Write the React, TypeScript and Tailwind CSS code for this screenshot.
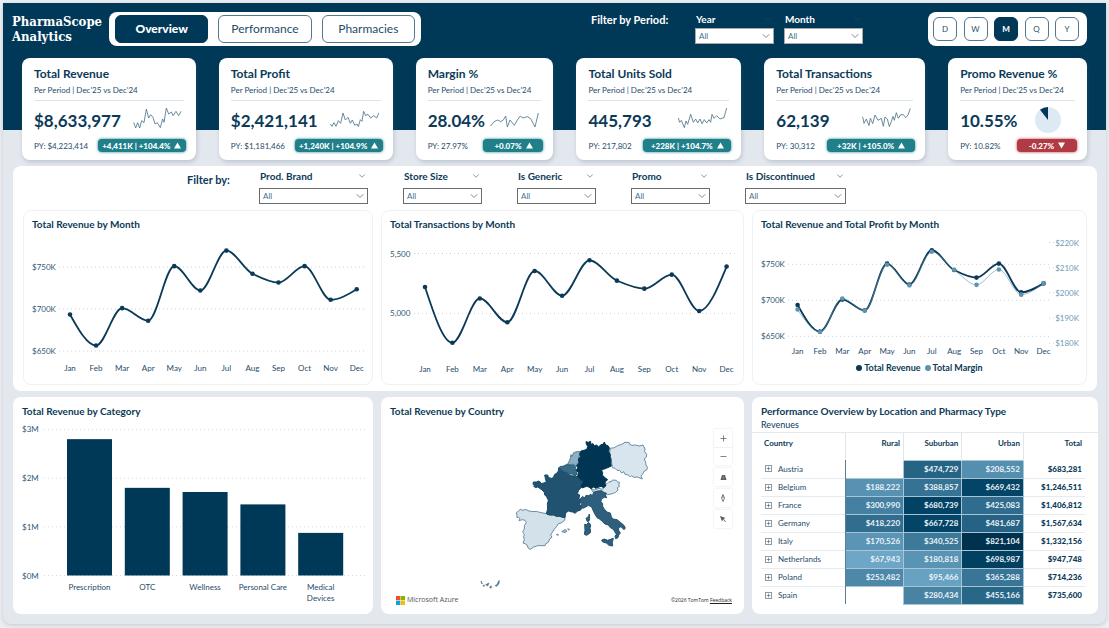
import { useState } from "react";
import type { ReactNode } from "react";
import { ChevronDown, Plus, Minus } from "lucide-react";
import clsx from "clsx";

const MONTHS = ["Jan", "Feb", "Mar", "Apr", "May", "Jun", "Jul", "Aug", "Sep", "Oct", "Nov", "Dec"];
const REVENUE = [693.5, 656.5, 701, 686, 751, 722, 769.5, 742, 731.5, 751, 711, 723.5];
const TRANSACTIONS = [5220, 4754, 5124, 4925, 5354, 5147, 5443, 5273, 5206, 5323, 5019, 5391];
const MARGIN = [193.4, 184.5, 197.8, 193.1, 211.2, 203, 216.3, 209.2, 203.2, 209.3, 199.3, 203.9];

const KPIS = [
  {
    title: "Total Revenue", value: "$8,633,977", py: "$4,223,414", delta: "+4,411K | +104.4%", up: true,
    box: "403 319 147 66",
    spark: "405,365 411,382 417,366 423,382 429,360 436,366 443,325 450,352 456,342 463,350 469,370 476,366 485,381 492,355 496,365 503,322 510,340 518,334 523,345 532,332 540,345 547,332",
  },
  {
    title: "Total Profit", value: "$2,421,141", py: "$1,181,466", delta: "+1,240K | +104.9%", up: true,
    box: "986 319 147 66",
    spark: "987,370 992,377 998,366 1004,377 1011,360 1018,368 1025,337 1032,358 1040,350 1047,368 1053,358 1060,374 1067,370 1071,378 1077,357 1082,362 1087,332 1093,345 1100,341 1108,352 1117,345 1126,352 1133,336",
  },
  {
    title: "Margin %", value: "28.04%", py: "27.97%", delta: "+0.07%", up: true,
    box: "268 323 147 66",
    spark: "270,380 280,367 291,362 300,367 308,362 315,350 320,383 328,362 341,378 350,362 359,350 367,356 380,352 390,358 403,383 413,341",
  },
  {
    title: "Total Units Sold", value: "445,793", py: "217,802", delta: "+228K | +104.7%", up: true,
    box: "834 322 147 66",
    spark: "835,355 839,368 844,362 853,384 858,364 863,374 872,344 880,368 887,358 893,370 900,358 906,372 913,360 920,370 927,360 932,368 936,344 942,356 950,348 960,358 972,354 980,325",
  },
  {
    title: "Total Transactions", value: "62,139", py: "30,312", delta: "+32K | +105.0%", up: true,
    box: "365 316 147 66",
    spark: "367,345 371,365 378,352 386,372 390,350 393,356 397,366 404,340 413,356 423,350 429,374 434,346 441,352 447,375 453,360 458,344 462,356 468,333 474,350 481,339 489,339 496,348 503,340 510,320",
  },
  { title: "Promo Revenue %", value: "10.55%", py: "10.82%", delta: "-0.27%", up: false },
];

const FILTERS = [
  { label: "Prod. Brand", width: "w-[109px]" },
  { label: "Store Size", width: "w-[79px]" },
  { label: "Is Generic", width: "w-[79px]" },
  { label: "Promo", width: "w-[79px]" },
  { label: "Is Discontinued", width: "w-[101px]" },
];

const CATEGORIES = [
  { lines: ["Prescription"], value: 2.8 },
  { lines: ["OTC"], value: 1.8 },
  { lines: ["Wellness"], value: 1.715 },
  { lines: ["Personal Care"], value: 1.46 },
  { lines: ["Medical", "Devices"], value: 0.875 },
];

const COUNTRIES: { name: string; cells: (number | null)[]; total: number }[] = [
  { name: "Austria", cells: [null, 474729, 208552], total: 683281 },
  { name: "Belgium", cells: [188222, 388857, 669432], total: 1246511 },
  { name: "France", cells: [300990, 680739, 425083], total: 1406812 },
  { name: "Germany", cells: [418220, 667728, 481687], total: 1567634 },
  { name: "Italy", cells: [170526, 340525, 821104], total: 1332156 },
  { name: "Netherlands", cells: [67943, 180818, 698987], total: 947748 },
  { name: "Poland", cells: [253482, 95466, 365288], total: 714236 },
  { name: "Spain", cells: [null, 280434, 455166], total: 735600 },
];

const money = (n: number) => "$" + n.toLocaleString("en-US");

// light -> dark blue scale for the matrix
function heat(v: number) {
  const stops = [
    { at: 67943, c: [109, 166, 198] },
    { at: 680739, c: [2, 66, 100] },
    { at: 821104, c: [0, 50, 80] },
  ];
  const i = v <= stops[1].at ? 0 : 1;
  const t = (v - stops[i].at) / (stops[i + 1].at - stops[i].at);
  const c = stops[i].c.map((a, k) => Math.round(a + (stops[i + 1].c[k] - a) * t));
  return `rgb(${c.join(",")})`;
}

// monotone cubic, so the curve never overshoots a point
function smoothPath(pts: number[][]) {
  const n = pts.length;
  const slope = pts.slice(1).map((p, i) => (p[1] - pts[i][1]) / (p[0] - pts[i][0]));
  const tan = pts.map((_, i) => {
    if (i === 0 || i === n - 1) return 0;
    const a = slope[i - 1], b = slope[i];
    return a * b <= 0 ? 0 : (2 * a * b) / (a + b);
  });
  tan[0] = (3 * slope[0] - tan[1]) / 2;
  tan[n - 1] = (3 * slope[n - 2] - tan[n - 2]) / 2;
  let d = `M${pts[0][0]},${pts[0][1]}`;
  for (let i = 0; i < n - 1; i++) {
    const h = (pts[i + 1][0] - pts[i][0]) / 3;
    d += `C${pts[i][0] + h},${pts[i][1] + tan[i] * h} ${pts[i + 1][0] - h},${pts[i + 1][1] - tan[i + 1] * h} ${pts[i + 1][0]},${pts[i + 1][1]}`;
  }
  return d;
}

type Tick = { label: string; y: number };
type Series = { data: number[]; y: (v: number) => number; color: string; width: number };

function LineChart({ label, width, height, x0, x1, grid, monthY, ticks, rightTicks = [], series }: {
  label: string; width: number; height: number; x0: number; x1: number; grid: [number, number];
  monthY: number; ticks: Tick[]; rightTicks?: Tick[]; series: Series[];
}) {
  const step = (x1 - x0) / 11;
  return (
    <svg viewBox={`0 0 ${width} ${height}`} className="block w-full h-auto" role="img" aria-label={label}>
      {ticks.map((t) => (
        <g key={t.label}>
          <line x1={grid[0]} x2={grid[1]} y1={t.y} y2={t.y} stroke="#c9d3da" strokeDasharray="1 3" />
          <text x={8} y={t.y + 3} className="text-[8px] fill-[#2f5a76]">{t.label}</text>
        </g>
      ))}
      {rightTicks.map((t) => (
        <g key={t.label}>
          <line x1={grid[1] - 2} x2={grid[1] + 4} y1={t.y} y2={t.y} stroke="#c9d3da" strokeDasharray="1 3" />
          <text x={width - 7} y={t.y + 3} textAnchor="end" className="text-[8px] fill-[#6f9ab5]">{t.label}</text>
        </g>
      ))}
      {MONTHS.map((m, i) => (
        <text key={m} x={x0 + step * i} y={monthY} textAnchor="middle" className="text-[8px] fill-[#1f4c6a]">{m}</text>
      ))}
      {series.map((s) => {
        const pts = s.data.map((v, i) => [x0 + step * i, s.y(v)]);
        return (
          <g key={s.color}>
            <path d={smoothPath(pts)} fill="none" stroke={s.color} strokeWidth={s.width} />
            {pts.map(([x, y]) => <circle key={x} cx={x} cy={y} r={2.3} fill={s.color} />)}
          </g>
        );
      })}
    </svg>
  );
}

function BarChart() {
  const y = (v: number) => 156.5 - v * 48.7;
  return (
    <svg viewBox="0 0 360 190" className="block w-full h-auto" role="img" aria-label="Total revenue by category">
      {[3, 2, 1, 0].map((v) => (
        <g key={v}>
          <line x1={31} x2={355} y1={y(v)} y2={y(v)} stroke="#d3dbe1" strokeDasharray="1 3" />
          <text x={9} y={y(v) + 3} className="text-[8px] fill-[#2f5a76]">${v}M</text>
        </g>
      ))}
      {CATEGORIES.map((c, i) => (
        <g key={c.lines[0]}>
          <rect x={54 + i * 57.8} y={y(c.value)} width={45} height={c.value * 48.7} fill="#003957" />
          {c.lines.map((line, k) => (
            <text key={line} x={76.5 + i * 57.8} y={171 + k * 11} textAnchor="middle" className="text-[8px] fill-[#1f4c6a]">{line}</text>
          ))}
        </g>
      ))}
    </svg>
  );
}

function EuropeMap() {
  return (
    <svg viewBox="-372 -48 1089 585" className="block w-full h-auto" role="img" aria-label="Total revenue by country">
      <g strokeWidth={3} strokeLinejoin="round">
        {/* Poland */}
        <path fill="#d8e5ef" stroke="#6a8ca2" d="M316,40 328,38 338,32 350,28 360,22 372,22 374,28 380,31 392,30 402,33 414,30 420,42 419,50 425,58 424,66 418,72 422,82 423,90 428,98 424,106 418,108 412,118 408,124 412,132 402,128 398,126 386,127 380,122 376,126 370,120 360,118 356,110 350,114 344,106 336,106 330,100 322,98 320,84 318,70 313,58Z" />
        {/* Spain */}
        <path fill="#d3e1eb" stroke="#6a8ca2" d="M34,234 40,228 46,223 54,226 62,223 72,228 84,230 94,229 104,232 124,236 132,240 146,240 154,244 164,244 180,247 179,256 168,264 160,266 154,276 148,282 142,292 137,300 141,307 134,312 130,322 122,326 120,332 108,332 98,332 90,335 86,336 76,343 70,340 66,330 60,326 54,324 58,314 56,306 58,298 53,290 58,282 58,272 64,262 60,256 52,254 42,257 44,250 40,246 36,248 36,241Z" />
        {/* Balearics and Canaries */}
        <path fill="#9ab5c6" stroke="#4f778f" strokeWidth={2} d="M154,299 159,297 160,301ZM170,290 176,286 182,283 186,289 180,293ZM188,281 194,283 191,286Z" />
        <path fill="#4f778f" stroke="#4f778f" strokeWidth={2} d="M-72,438 -70,446 -68,446ZM-66,451 -62,450 -63,455ZM-58,449 -48,444 -52,453ZM-46,457 -42,452 -40,457 -43,460ZM-30,452 -24,449 -19,438 -17,436 -18,446 -25,454Z" />
        {/* France, Corsica is drawn with the islands below */}
        <path fill="#21526f" stroke="#184b69" d="M161,99 170,104 176,110 186,112 192,120 206,124 218,124 224,134 237,139 232,150 230,156 221,166 217,176 224,180 222,190 228,198 224,208 232,218 226,226 218,228 210,235 204,231 196,230 190,228 182,234 180,248 172,247 164,244 154,244 146,240 134,240 124,236 128,222 127,208 130,196 124,184 119,180 118,172 110,164 104,160 98,156 92,158 86,154 90,149 84,148 85,141 94,141 100,138 106,141 108,146 116,144 124,141 122,134 119,120 128,120 131,128 140,130 146,127 148,119 156,114 160,108Z" />
        {/* Netherlands */}
        <path fill="#8fafc4" stroke="#55809a" d="M226,50 227,60 221,64 224,74 219,82 214,94 208,88 198,88 186,90 192,80 196,70 198,59 201,64 206,53 216,50Z" />
        {/* Belgium */}
        <path fill="#3c6b88" stroke="#265b79" d="M161,99 166,94 174,94 184,89 198,91 206,90 212,96 210,102 216,108 214,120 206,124 202,116 194,118 186,112 178,110 172,104Z" />
        {/* Austria */}
        <path fill="#d8e5ef" stroke="#6a8ca2" d="M258,162 268,165 282,160 292,163 298,156 298,148 306,146 312,140 318,141 322,135 334,136 338,141 344,142 341,150 344,154 337,158 339,165 332,172 322,176 308,179 296,174 288,170 274,170 264,171Z" />
        {/* Germany */}
        <path fill="#003654" stroke="#003654" d="M243,20 250,22 257,19 257,28 264,26 268,32 276,30 279,37 288,29 294,28 298,21 302,30 309,32 313,38 311,50 316,58 315,66 318,74 317,84 319,93 308,98 296,103 289,106 293,112 292,120 300,128 308,134 301,140 300,146 303,152 296,158 288,154 282,156 272,160 266,156 258,161 252,156 244,154 232,159 228,154 232,146 237,138 226,134 218,124 220,112 214,106 218,98 215,92 222,84 220,72 226,66 224,56 228,48 240,45 246,42 248,34 244,28Z" />
        {/* Italy */}
        <path fill="#2e5f7c" stroke="#235370" d="M226,192 232,185 240,188 243,181 250,182 258,178 262,182 266,172 278,168 290,167 298,173 304,174 301,180 305,188 298,187 289,192 288,200 293,206 293,214 299,224 308,232 316,234 319,246 324,252 336,254 346,262 356,270 361,279 357,284 348,275 341,278 341,286 346,294 341,300 339,308 332,311 330,304 334,298 328,288 324,282 316,278 310,270 300,267 290,258 284,252 276,248 270,238 264,226 260,216 250,211 242,216 234,220 227,214 230,206Z" />
        <path fill="#2e5f7c" stroke="#235370" d="M290,315 298,312 308,316 325,310 322,322 323,333 312,331 304,324 293,321ZM239,268 244,269 251,262 257,270 255,280 257,292 250,298 244,301 238,298 240,286ZM243,250 250,245 253,237 254,250 252,258 247,260Z" />
      </g>
    </svg>
  );
}

function Field({ id, label, width, dark = false }: { id: string; label: string; width: string; dark?: boolean }) {
  return (
    <div className={width}>
      <div className="flex items-center justify-between px-px">
        <label htmlFor={id} className={clsx("text-[10px] leading-3 font-bold whitespace-nowrap", dark ? "text-white" : "text-[#0b3a58]")}>{label}</label>
        <ChevronDown size={10} strokeWidth={1.5} className={dark ? "text-[#1d4c68]" : "text-[#4a5c68]"} />
      </div>
      <div className={clsx("relative", dark ? "mt-[3px]" : "mt-1.5")}>
        <select id={id} className={clsx("block w-full h-4 appearance-none bg-white border pl-[3px] text-[8px] leading-3 text-[#47708c]", dark ? "border-[#a9a9a9]" : "border-[#6b6b6b]")}>
          <option>All</option>
        </select>
        <ChevronDown size={12} strokeWidth={1.5} className="absolute right-0.5 top-0.5 text-[#55626c] pointer-events-none" />
      </div>
    </div>
  );
}

function Panel({ title, framed = false, children }: { title: string; framed?: boolean; children: ReactNode }) {
  return (
    <section className={clsx("rounded-lg bg-white overflow-hidden min-w-0", framed && "border border-[#eff1f4]")}>
      <h2 className={clsx("text-[10px] leading-4 font-bold text-[#0b3a58]", framed ? "pl-2 pt-[5px]" : "pl-[9px] pt-1.5")}>{title}</h2>
      {children}
    </section>
  );
}

function KpiCard({ kpi }: { kpi: (typeof KPIS)[number] }) {
  return (
    <article className="bg-white rounded-lg px-3 pt-2 pb-2 min-w-0 shadow-[1px_2px_4px_rgba(70,90,120,0.25)]">
      <h2 className="text-[12px] leading-4 font-bold text-[#0b3a58] whitespace-nowrap">{kpi.title}</h2>
      <p className="mt-0.5 text-[8px] leading-3 text-[#1f4c6a] whitespace-nowrap">Per Period | Dec'25 vs Dec'24</p>
      <div className="mt-1 border-t border-[#dbe4ea]" />
      <div className="mt-1.5 flex justify-between h-[26px]">
        <span className="text-[17px] leading-7 font-bold text-[#0b3a58]">{kpi.value}</span>
        {kpi.spark ? (
          <svg viewBox={kpi.box} className="w-[49px] h-[22px] mr-0.5 shrink-0" aria-hidden="true">
            <polyline points={kpi.spark} fill="none" stroke="#54788f" strokeWidth={2.6} />
          </svg>
        ) : (
          <svg viewBox="0 0 26 26" className="w-[26px] h-[26px] mr-3.5 shrink-0" aria-hidden="true">
            <circle cx="13" cy="13" r="13" fill="#deeaf3" />
            <path d="M13,13 V0 A13,13 0 0 0 5,2.8Z" fill="#003957" />
          </svg>
        )}
      </div>
      <div className="mt-1.5 flex items-center justify-between -mr-0.5">
        <span className="text-[8px] leading-3 text-[#1f4c6a] whitespace-nowrap">PY: {kpi.py}</span>
        <span className={clsx(
          "h-[13px] rounded flex items-center justify-center gap-1 text-[8px] leading-3 font-black text-white whitespace-nowrap",
          kpi.delta.includes("|") ? "w-[88px]" : "w-[60px]",
          kpi.up ? "bg-[#20808a] shadow-[0_0_3px_#20808a]" : "bg-[#b03b44] shadow-[0_0_3px_#b03b44]"
        )}>
          {kpi.delta}
          <svg viewBox="0 0 8 7" className="w-[7px] h-[7px]" aria-hidden="true">
            <path d={kpi.up ? "M4,0 8,7H0Z" : "M4,7 8,0H0Z"} fill="white" />
          </svg>
        </span>
      </div>
    </article>
  );
}

export default function App() {
  const [page, setPage] = useState("Overview");
  const [grain, setGrain] = useState("M");

  return (
    <div className="bg-[#eceff2] p-[3px] pb-1 font-['Lato','Liberation_Sans',sans-serif] text-[#0b3a58]">
      <div className="bg-[#e3e8ee] pb-2.5 rounded-b-lg shadow-[0_1px_4px_rgba(100,110,130,0.3)]">

        {/* Header */}
        <header className="bg-[#003957] pt-[9px] pb-[84px] pl-[9px] pr-[19px] flex">
          <h1 className="w-[97px] shrink-0 pt-0.5 font-['DejaVu_Serif_Condensed','DejaVu_Serif',serif] text-[13px] leading-[15px] font-bold text-white">
            PharmaScope Analytics
          </h1>
          <nav className="flex gap-2.5 h-[34px] w-[312px] shrink-0 bg-white rounded-lg px-1.5 py-[3px]">
            {["Overview", "Performance", "Pharmacies"].map((p) => (
              <button
                key={p}
                onClick={() => setPage(p)}
                className={clsx("flex-1 rounded-md text-[12px] border", page === p ? "bg-[#003957] border-[#003957] text-white font-black" : "bg-white border-[#54788f] text-[#1f4c6a]")}
              >
                {p}
              </button>
            ))}
          </nav>
          <div className="flex-1 flex justify-end pr-[65px]">
            <span className="w-[104px] pt-0.5 text-[11px] leading-3 font-bold text-white whitespace-nowrap">Filter by Period:</span>
            <div className="flex gap-2.5 pt-px">
              <Field id="year" label="Year" width="w-[79px]" dark />
              <Field id="month" label="Month" width="w-[79px]" dark />
            </div>
          </div>
          <div className="flex items-center justify-between w-[159px] h-[34px] shrink-0 bg-white rounded-lg pl-[5px] pr-2">
            {["D", "W", "M", "Q", "Y"].map((g) => (
              <button
                key={g}
                onClick={() => setGrain(g)}
                className={clsx("w-6 h-6 rounded-md text-[8px] border", grain === g ? "bg-[#003957] border-[#003957] text-white font-black" : "bg-white border-[#54788f] text-[#1f4c6a]")}
              >
                {g}
              </button>
            ))}
          </div>
        </header>

        {/* KPI cards, pulled up over the header */}
        <div className="-mt-[72px] pl-[19px] pr-[19px] grid grid-cols-[174fr_174fr_138fr_165fr_161fr_139fr] gap-[23px]">
          {KPIS.map((kpi) => <KpiCard key={kpi.title} kpi={kpi} />)}
        </div>

        <div className="mt-1.5 ml-2.5 mr-[9px] bg-white rounded-lg px-2.5 pb-1.5">
          <div className="flex h-11 pt-1 pl-[164px]">
            <span className="w-[72px] pt-0.5 text-[11px] leading-4 font-bold">Filter by:</span>
            <div className="flex gap-[35px]">
              {FILTERS.map((f) => <Field key={f.label} id={f.label} label={f.label} width={f.width} />)}
            </div>
          </div>

          <div className="grid grid-cols-[350fr_363fr_335fr] gap-2">
            <Panel title="Total Revenue by Month" framed>
              <LineChart
                label="Total revenue by month" width={348} height={152} x0={46} x1={332.7} grid={[35, 342]} monthY={139}
                ticks={[{ label: "$750K", y: 35 }, { label: "$700K", y: 77 }, { label: "$650K", y: 119 }]}
                series={[{ data: REVENUE, y: (v) => 35 + (750 - v) * 0.84, color: "#0b3a58", width: 1.8 }]}
              />
            </Panel>
            <Panel title="Total Transactions by Month" framed>
              <LineChart
                label="Total transactions by month" width={361} height={152} x0={43} x1={344.6} grid={[32, 355]} monthY={140}
                ticks={[{ label: "5,500", y: 21.5 }, { label: "5,000", y: 81.3 }]}
                series={[{ data: TRANSACTIONS, y: (v) => 21.5 + (5500 - v) * 0.1196, color: "#0b3a58", width: 1.8 }]}
              />
            </Panel>
            <Panel title="Total Revenue and Total Profit by Month" framed>
              <LineChart
                label="Total revenue and total profit by month" width={333} height={128} x0={44.6} x1={290.6} grid={[35, 298]} monthY={122}
                ticks={[{ label: "$750K", y: 32.3 }, { label: "$700K", y: 68.3 }, { label: "$650K", y: 104.3 }]}
                rightTicks={[220, 210, 200, 190, 180].map((v) => ({ label: `$${v}K`, y: 10.5 + (220 - v) * 2.52 }))}
                series={[
                  { data: REVENUE, y: (v) => 32.3 + (750 - v) * 0.72, color: "#0b3a58", width: 1.8 },
                  { data: MARGIN, y: (v) => 10.5 + (220 - v) * 2.52, color: "#5f93b0", width: 0.6 },
                ]}
              />
              <div className="flex justify-center gap-1 h-4 text-[9px] leading-4 font-bold">
                <span className="flex items-center gap-0.5"><i className="w-1.5 h-1.5 rounded-full bg-[#0b3a58]" />Total Revenue</span>
                <span className="flex items-center gap-0.5"><i className="w-1.5 h-1.5 rounded-full bg-[#5f93b0]" />Total Margin</span>
              </div>
            </Panel>
          </div>
        </div>

        <div className="mt-1.5 ml-2.5 mr-2 grid grid-cols-[360fr_363fr_346fr] gap-2">
          <Panel title="Total Revenue by Category">
            <BarChart />
          </Panel>

          <Panel title="Total Revenue by Country">
            <div className="relative">
              <EuropeMap />
              <div className="absolute right-3 top-2.5 w-[18px] flex flex-col gap-[3px] text-[#5c5c5c]">
                <div className="shadow-[0_0_2px_rgba(0,0,0,0.12)]">
                  <button aria-label="Zoom in" className="h-[18px] w-full flex items-center justify-center"><Plus size={9} /></button>
                  <button aria-label="Zoom out" className="h-[18px] w-full flex items-center justify-center border-t border-[#f1f1f1]"><Minus size={9} /></button>
                </div>
                <button aria-label="Pitch" className="h-[18px] flex items-center justify-center shadow-[0_0_2px_rgba(0,0,0,0.12)]">
                  <svg viewBox="0 0 12 10" className="w-[7px] h-[5px]"><path d="M3,0H9L12,10H0Z" fill="#5c5c5c" /><path d="M6,0V10M1.5,5H10.5" stroke="#aaa" strokeWidth="0.6" /></svg>
                </button>
                <button aria-label="Compass" className="h-[18px] flex items-center justify-center shadow-[0_0_2px_rgba(0,0,0,0.12)]">
                  <svg viewBox="0 0 8 16" className="w-1 h-2"><path d="M4,1 7,8 4,15 1,8Z" fill="none" stroke="#5c5c5c" strokeWidth="1.6" /><path d="M4,1 5,8H3Z" fill="#5c5c5c" /></svg>
                </button>
                <button aria-label="Select" className="h-[18px] flex items-center justify-center shadow-[0_0_2px_rgba(0,0,0,0.12)]">
                  <svg viewBox="0 0 12 12" className="w-1.5 h-1.5"><path d="M0,0 11,4 7,6 12,11 11,12 6,7 4,11Z" fill="#5c5c5c" /></svg>
                </button>
              </div>
              <div className="absolute inset-x-0 bottom-2 pl-[15px] pr-3 flex items-center justify-between">
                <span className="flex items-center gap-0.5 text-[7px] leading-3 font-['Open_Sans',sans-serif] text-[#555]">
                  <svg viewBox="0 0 9 9" className="w-[9px] h-[9px]" aria-hidden="true">
                    <path fill="#f25022" d="M0,0h4.3v4.3h-4.3z" /><path fill="#7fba00" d="M4.7,0h4.3v4.3h-4.3z" />
                    <path fill="#00a4ef" d="M0,4.7h4.3v4.3h-4.3z" /><path fill="#ffb900" d="M4.7,4.7h4.3v4.3h-4.3z" />
                  </svg>
                  Microsoft Azure
                </span>
                <span className="text-[5px] leading-3 text-[#222] font-['Open_Sans',sans-serif]">©2026 TomTom <a href="#feedback" className="underline">Feedback</a></span>
              </div>
            </div>
          </Panel>

          <Panel title="Performance Overview by Location and Pharmacy Type">
            <p className="pl-[9px] text-[9px] leading-[11px]">Revenues</p>
            <div className="mt-0.5 border-t border-[#e3e9ee] pl-[9px] pr-[13px]">
              <table className="w-full table-fixed border-collapse text-[8px] leading-3">
                <colgroup>
                  <col className="w-[26%]" /><col className="w-[18%]" /><col className="w-[18%]" /><col className="w-[19%]" /><col className="w-[19%]" />
                </colgroup>
                <thead>
                  <tr className="h-[27px] align-top font-bold">
                    <th className="text-left pl-[3px] pt-1">Country</th>
                    <th className="text-right pr-[3px] pt-1 border-l border-[#dfe6eb]">Rural</th>
                    <th className="text-right pr-[3px] pt-1 border-l border-[#dfe6eb]">Suburban</th>
                    <th className="text-right pr-[3px] pt-1 border-l border-[#dfe6eb]">Urban</th>
                    <th className="text-right pr-[3px] pt-1 border-l border-[#dfe6eb]">Total</th>
                  </tr>
                </thead>
                <tbody>
                  {COUNTRIES.map((row) => (
                    <tr key={row.name} className="h-[18px] border-b border-[#e6ebef] last:border-b-0">
                      <td className="border-r border-[#5c7c92]">
                        <div className="flex items-center gap-1.5 pl-1">
                          <button aria-label={`Expand ${row.name}`} className="w-[7px] h-[7px] border border-[#8a9aa6] flex items-center justify-center text-[#4a5c68]"><Plus size={5} strokeWidth={3} /></button>
                          <span className="text-[#1f4c6a]">{row.name}</span>
                        </div>
                      </td>
                      {row.cells.map((v, i) => (
                        <td
                          key={i}
                          className="text-right pr-[3px] font-bold text-[#eaf3f8] border border-l-[#a9c4d4] border-y-[#a9c4d4] border-r-[#a9c4d4] empty:border-y-0"
                          style={v === null ? undefined : { backgroundColor: heat(v) }}
                        >
                          {v === null ? null : money(v)}
                        </td>
                      ))}
                      <td className="text-right pr-[3px] font-black">{money(row.total)}</td>
                    </tr>
                  ))}
                </tbody>
              </table>
            </div>
          </Panel>
        </div>
      </div>
    </div>
  );
}
